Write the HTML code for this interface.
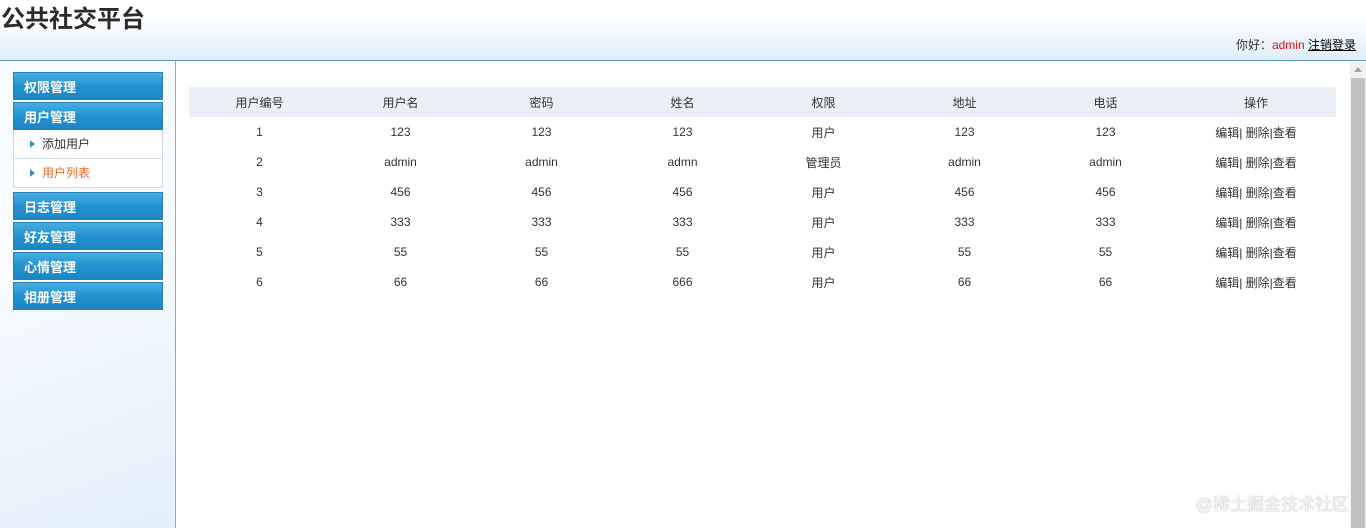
<!DOCTYPE html>
<html><head><meta charset="utf-8"><style>
*{margin:0;padding:0;box-sizing:border-box}
body{width:1366px;height:528px;overflow:hidden;font-family:"Liberation Sans","Noto Sans CJK SC",sans-serif;font-size:12px;color:#333;background:#fff;position:relative}
#hd{position:absolute;left:0;top:0;width:1366px;height:61px;background:linear-gradient(#fff 0%,#fff 25%,#e0eefa 100%);border-bottom:1px solid #5a9ac8}
#hd h1{position:absolute;left:1px;top:2px;font-size:24px;font-weight:bold;color:#2b2b2b;font-family:"Noto Sans CJK SC",sans-serif;line-height:30px}
#hd .u{position:absolute;right:10px;top:36px;font-size:12px;color:#333}
#hd .u b{color:#e01010;font-weight:normal}
#hd .u a{color:#000;text-decoration:underline}
#sb{position:absolute;left:0;top:61px;width:176px;height:467px;border-right:1px solid #7bb0d8;background:linear-gradient(160deg,#f8fbff 40%,#e3f0fb)}
.btn{position:absolute;left:13px;width:150px;height:28px;background:linear-gradient(#45aee2,#2392d0 50%,#1d86c4);border:1px solid #2a7fb8;color:#fff;font-weight:bold;font-size:13px;line-height:27px;padding-left:10px;font-family:"Noto Sans CJK SC",sans-serif}
.sub{position:absolute;left:13px;width:150px;height:58px;background:#fff;border:1px solid #cfdbe6;border-top:none}
.sub div{height:29px;line-height:28px;padding-left:28px;position:relative;font-size:12px}
.sub div:first-child{border-bottom:1px solid #d4dde6}
.sub div:before{content:"";position:absolute;left:16px;top:10px;border-left:5px solid #3a8fc8;border-top:4px solid transparent;border-bottom:4px solid transparent}
#tb{position:absolute;left:189px;top:87px;width:1147px;border-collapse:collapse;table-layout:fixed}
#tb th{background:#ebf0f7;font-weight:normal;height:30px}
#tb td,#tb th{text-align:center;font-size:12px}
#tb td{height:30px}
#sc{position:absolute;left:1350px;top:62px;width:16px;height:466px;background:#f1f1f1}
#sc i{position:absolute;left:1px;top:16px;width:14px;height:450px;background:#c1c1c1}
#sc:before{content:"";position:absolute;left:4px;top:5px;border-bottom:5px solid #a3a3a3;border-left:4px solid transparent;border-right:4px solid transparent}
#wm{position:absolute;right:17px;top:490px;color:rgba(255,255,255,0.9);font-size:17px;text-shadow:0 0 1px #888}
</style></head><body>
<div id="hd"><h1>公共社交平台</h1><div class="u">你好：<b>admin</b> <a>注销登录</a></div></div>
<div id="sb">
<div class="btn" style="top:11px">权限管理</div>
<div class="btn" style="top:41px">用户管理</div>
<div class="sub" style="top:69px"><div>添加用户</div><div style="color:#e8661b">用户列表</div></div>
<div class="btn" style="top:131px">日志管理</div>
<div class="btn" style="top:161px">好友管理</div>
<div class="btn" style="top:191px">心情管理</div>
<div class="btn" style="top:221px">相册管理</div>
</div>
<table id="tb">
<colgroup><col style="width:141px"><col style="width:141px"><col style="width:141px"><col style="width:141px"><col style="width:141px"><col style="width:141px"><col style="width:141px"><col></colgroup>
<tr><th>用户编号</th><th>用户名</th><th>密码</th><th>姓名</th><th>权限</th><th>地址</th><th>电话</th><th>操作</th></tr>
<tr><td>1</td><td>123</td><td>123</td><td>123</td><td>用户</td><td>123</td><td>123</td><td>编辑| 删除|查看</td></tr>
<tr><td>2</td><td>admin</td><td>admin</td><td>admn</td><td>管理员</td><td>admin</td><td>admin</td><td>编辑| 删除|查看</td></tr>
<tr><td>3</td><td>456</td><td>456</td><td>456</td><td>用户</td><td>456</td><td>456</td><td>编辑| 删除|查看</td></tr>
<tr><td>4</td><td>333</td><td>333</td><td>333</td><td>用户</td><td>333</td><td>333</td><td>编辑| 删除|查看</td></tr>
<tr><td>5</td><td>55</td><td>55</td><td>55</td><td>用户</td><td>55</td><td>55</td><td>编辑| 删除|查看</td></tr>
<tr><td>6</td><td>66</td><td>66</td><td>666</td><td>用户</td><td>66</td><td>66</td><td>编辑| 删除|查看</td></tr>
</table>
<div id="sc"><i></i></div>
<div id="wm">@稀土掘金技术社区</div>
</body></html>
